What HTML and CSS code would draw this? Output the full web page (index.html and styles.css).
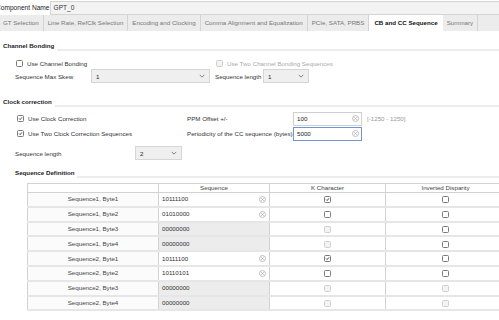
FILE: index.html
```html
<!DOCTYPE html>
<html lang="en">
<head>
  <meta charset="UTF-8" />
  <title>CB and CC Sequence</title>
  <meta name="viewport" content="width=device-width, initial-scale=1.0" />
  <link rel="stylesheet" href="styles.css">
</head>
<body>
  <div class="namebar">
    <span class="name-label">Component Name</span>
    <div class="name-field">GPT_0</div>
  </div>

  <div class="tabs">
    <span class="tab first">GT Selection</span>
    <span class="tab">Line Rate, RefClk Selection</span>
    <span class="tab">Encoding and Clocking</span>
    <span class="tab">Comma Alignment and Equalization</span>
    <span class="tab">PCIe, SATA, PRBS</span>
    <span class="tab active">CB and CC Sequence</span>
    <span class="tab">Summary</span>
  </div>

  <div class="page">
    <!-- Channel bonding -->
    <div class="section-title cb-title"><span>Channel Bonding</span><i class="rule"></i></div>
    <div class="cb-row">
      <label class="check cb-use"><span class="box"></span>Use Channel Bonding</label>
      <label class="check disabled"><span class="box"></span>Use Two Channel Bonding Sequences</label>
    </div>
    <div class="cb-row2">
      <span class="skew-label">Sequence Max Skew</span>
      <div class="select skew-select">1<svg class="chev" viewBox="0 0 8 5"><path d="M1 1 L4 4 L7 1" /></svg></div>
      <span class="len-label">Sequence length</span>
      <div class="select len-select">1<svg class="chev" viewBox="0 0 8 5"><path d="M1 1 L4 4 L7 1" /></svg></div>
    </div>

    <!-- Clock correction -->
    <div class="section-title cc-title"><span>Clock correction</span><i class="rule"></i></div>
    <div class="cc-grid">
      <label class="check"><span class="box on"><svg viewBox="0 0 9 9"><path d="M2 4.6 L3.8 6.4 L7.2 2.4" /></svg></span>Use Clock Correction</label>
      <span class="cc-label">PPM Offset +/-</span>
      <div class="input">100<svg class="clear" viewBox="0 0 8 8"><circle cx="4" cy="4" r="3.4" /><path d="M2.6 2.6 L5.4 5.4 M5.4 2.6 L2.6 5.4" /></svg></div>
      <span class="hint">[-1250 - 1250]</span>

      <label class="check"><span class="box on"><svg viewBox="0 0 9 9"><path d="M2 4.6 L3.8 6.4 L7.2 2.4" /></svg></span>Use Two Clock Correction Sequences</label>
      <span class="cc-label">Periodicity of the CC sequence (bytes)</span>
      <div class="input focus">5000<svg class="clear" viewBox="0 0 8 8"><circle cx="4" cy="4" r="3.4" /><path d="M2.6 2.6 L5.4 5.4 M5.4 2.6 L2.6 5.4" /></svg></div>
      <span></span>
    </div>
    <div class="cc-len">
      <span class="cc-len-label">Sequence length</span>
      <div class="select cc-select">2<svg class="chev" viewBox="0 0 8 5"><path d="M1 1 L4 4 L7 1" /></svg></div>
    </div>

    <!-- Sequence definition -->
    <div class="section-title sd-title"><span>Sequence Definition</span><i class="rule"></i></div>
    <table class="seq">
      <thead>
        <tr><th class="c-name"></th><th class="c-seq">Sequence</th><th class="c-k">K Character</th><th class="c-inv">Inverted Disparity</th></tr>
      </thead>
      <tbody id="rows"></tbody>
    </table>
  </div>

  <script>
    const rows = [
      { name: 'Sequence1, Byte1', value: '10111100', edit: true,  k: 'on',  inv: 'off' },
      { name: 'Sequence1, Byte2', value: '01010000', edit: true,  k: 'off', inv: 'off' },
      { name: 'Sequence1, Byte3', value: '00000000', edit: false, k: 'dis', inv: 'off' },
      { name: 'Sequence1, Byte4', value: '00000000', edit: false, k: 'dis', inv: 'off' },
      { name: 'Sequence2, Byte1', value: '10111100', edit: true,  k: 'on',  inv: 'off' },
      { name: 'Sequence2, Byte2', value: '10110101', edit: true,  k: 'off', inv: 'off' },
      { name: 'Sequence2, Byte3', value: '00000000', edit: false, k: 'dis', inv: 'dis' },
      { name: 'Sequence2, Byte4', value: '00000000', edit: false, k: 'dis', inv: 'dis' }
    ];

    const tick = '<svg viewBox="0 0 9 9"><path d="M2 4.6 L3.8 6.4 L7.2 2.4" /></svg>';
    const clear = '<svg class="clear" viewBox="0 0 8 8"><circle cx="4" cy="4" r="3.4" /><path d="M2.6 2.6 L5.4 5.4 M5.4 2.6 L2.6 5.4" /></svg>';

    function box(state) {
      if (state === 'on') return `<span class="box on">${tick}</span>`;
      if (state === 'dis') return '<span class="box dis"></span>';
      return '<span class="box"></span>';
    }

    document.getElementById('rows').innerHTML = rows.map(r => `
      <tr>
        <td class="c-name">${r.name}</td>
        <td class="c-seq ${r.edit ? 'edit' : 'locked'}"><div class="cell">${r.value}${r.edit ? clear : ''}</div></td>
        <td class="c-k">${box(r.k)}</td>
        <td class="c-inv">${box(r.inv)}</td>
      </tr>`).join('');
  </script>
</body>
</html>
```

FILE: styles.css
```css
body {
  margin: 0;
  width: 499px;
  height: 320px;
  overflow: hidden;
  background: #fff;
  color: #333;
  font-family: "Liberation Sans", Arial, sans-serif;
  font-size: 6.2px;
  white-space: nowrap;
}
.namebar {
  display: flex;
  align-items: center;
  height: 15px;
}
.name-label {
  flex: 0 0 52px;
  margin-left: -4px;
  color: #222;
  font-size: 6.6px;
}
.name-field {
  flex: 1;
  height: 12px;
  line-height: 12px;
  padding-left: 3px;
  border: 1px solid #d4d4d4;
  border-right: none;
  background: #f3f3f3;
  color: #333;
  font-size: 6.6px;
}
.tabs {
  display: flex;
  height: 16px;
  background: #ececec;
  overflow: hidden;
}
.tab {
  line-height: 16px;
  padding: 0 4px;
  color: #777;
  border-right: 1px solid #d4d4d4;
}
.tab.first {
  margin-left: -1px;
}
.tab.active {
  background: #fff;
  color: #111;
  font-weight: bold;
  padding: 0 5px 0 5px;
  border-right: none;
}
.section-title {
  display: flex;
  height: 11px;
  line-height: 11px;
  font-weight: bold;
  color: #222;
}
.section-title .rule {
  flex: 1;
  align-self: flex-end;
  height: 0;
  border-top: 2px solid #ececec;
  margin-left: 3px;
}
.cb-title {
  margin: 9px 0 0 3px;
}
.cc-title {
  margin: 13px 0 0 3px;
}
.sd-title {
  margin: 7px 0 0 15px;
}
.check {
  display: flex;
  align-items: center;
  color: #333;
}
.box {
  flex: 0 0 auto;
  box-sizing: border-box;
  width: 7px;
  height: 7px;
  margin-right: 4px;
  border: 1px solid #7a7a7a;
  border-radius: 1.5px;
  background: #fff;
  display: inline-flex;
}
.box svg {
  width: 100%;
  height: 100%;
}
.box svg path {
  fill: none;
  stroke: #222;
  stroke-width: 1.5;
}
.box.dis {
  border-color: #d0d0d0;
  background: #f3f3f3;
}
.check.disabled {
  color: #aaa;
}
.check.disabled .box {
  border-color: #cfcfcf;
  background: #f3f3f3;
}
.cb-row {
  display: flex;
  align-items: center;
  height: 12px;
  margin-top: 6px;
  padding-left: 16px;
}
.cb-use {
  width: 200px;
}
.cb-row2 {
  display: flex;
  align-items: center;
  height: 14px;
  padding-left: 15px;
}
.skew-label {
  width: 76px;
}
.len-label {
  width: 48px;
  margin-left: 5px;
}
.select {
  box-sizing: border-box;
  height: 14px;
  display: flex;
  align-items: center;
  justify-content: space-between;
  padding: 0 4px 0 4px;
  border: 1px solid #d6d6d6;
  background: #efefef;
  color: #222;
}
.chev {
  width: 6px;
  height: 4px;
}
.chev path {
  fill: none;
  stroke: #777;
  stroke-width: 1.2;
}
.skew-select {
  width: 119px;
}
.len-select {
  width: 46px;
}
.cc-grid {
  display: grid;
  grid-template-columns: 170px 106px 69px auto;
  grid-auto-rows: 15px;
  align-items: center;
  margin-top: 4px;
  padding-left: 17px;
}
.cc-label {
  color: #333;
}
.input {
  box-sizing: border-box;
  height: 14px;
  display: flex;
  align-items: center;
  justify-content: space-between;
  padding: 0 2px 0 3px;
  border: 1px solid #cfcfcf;
  background: #fff;
  color: #222;
}
.input.focus {
  border-color: #6f94cf;
}
.hint {
  margin-left: 5px;
  color: #999;
}
.clear {
  width: 7px;
  height: 7px;
}
.clear circle {
  fill: #fff;
  stroke: #b5b5b5;
  stroke-width: 1;
}
.clear path {
  stroke: #aaa;
  stroke-width: 0.9;
}
.cc-len {
  display: flex;
  align-items: center;
  height: 14px;
  margin-top: 5px;
  padding-left: 15px;
}
.cc-len-label {
  width: 120px;
}
.cc-select {
  width: 47px;
}
table.seq {
  margin: 5px 0 0 27px;
  border-collapse: collapse;
  table-layout: fixed;
  width: 479px;
  border: 1px solid #d2d2d2;
}
.seq th {
  height: 8px;
  line-height: 8px;
  padding: 0;
  font-weight: normal;
  color: #444;
  background: #fff;
  border-right: 1px solid #d2d2d2;
  border-bottom: 1px solid #d2d2d2;
}
.seq td {
  height: 12.8px;
  line-height: 10px;
  padding: 0;
  text-align: center;
  border-right: 1px solid #d2d2d2;
  border-bottom: 2px solid #e6e6e6;
}
.seq .c-name {
  width: 130px;
}
.seq td.c-name {
  background: #fbfbfb;
  color: #444;
}
.seq .c-seq {
  width: 110px;
}
.seq .c-k {
  width: 115px;
}
.seq td .box {
  margin: 0 auto;
  vertical-align: middle;
}
.seq td.locked {
  background: #ececec;
}
.cell {
  display: flex;
  align-items: center;
  justify-content: space-between;
  padding: 0 3px;
  text-align: left;
  color: #333;
}
```
